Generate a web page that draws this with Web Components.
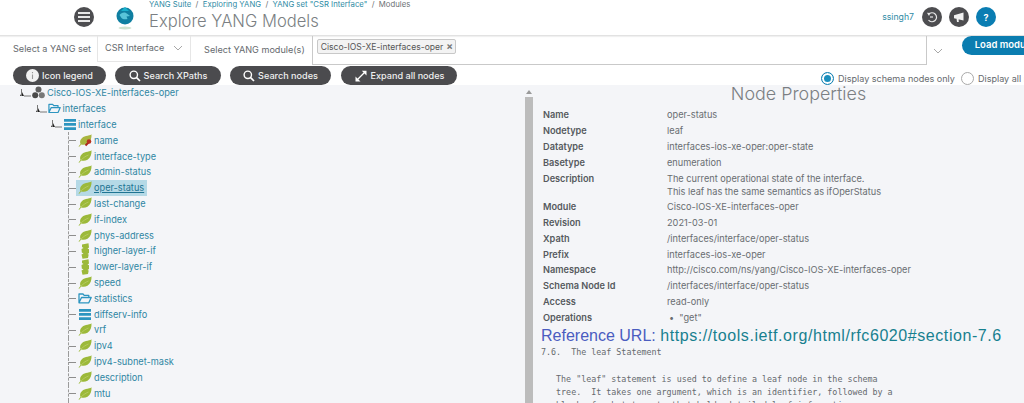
<!DOCTYPE html>
<html>
<head>
<meta charset="utf-8">
<title>Explore YANG Models</title>
<style>
    html, body { margin: 0; padding: 0; background: #fff; }
    body {
        width: 1024px;
        height: 403px;
        overflow: hidden;
        font-family: Inter, "Liberation Sans", sans-serif;
    }
</style>
</head>
<body>
<ys-app>
    <ys-header></ys-header>
    <ys-toolbar></ys-toolbar>
    <ys-actions></ys-actions>
    <ys-explorer></ys-explorer>
</ys-app>

<script>
const LEAF = "M.5 12.500 2.500 10C1 6 4 3 8 2 10 1.500 12.500 1.500 13.500 .3 13.800 4 12.500 8 9.500 9.800 7.500 11 5 11 3.300 10.500L1.200 12.800Z";
const VEIN = `<path d="M3 10C5.500 7.500 8 6 10.500 5" fill="none" stroke="#bdd070" stroke-width=".7"/>`;

const ICONS = {
    leaf: `<svg width="14" height="13" viewBox="0 0 14 13"><path d="${LEAF}" fill="#9cb93a"/>${VEIN}</svg>`,
    key: `<svg width="14" height="13" viewBox="0 0 14 13"><path d="${LEAF}" fill="#a9b640"/><path d="M7.500 11.500 11 8" stroke="#a8281c" stroke-width="2"/><circle cx="11" cy="7.500" r="2.300" fill="#b8321f"/></svg>`,
    list: `<svg width="12" height="11" viewBox="0 0 12 11"><path d="M0 0h12v2.700H0zM0 4.100h12v2.700H0zM0 8.200h12v2.700H0z" fill="#2d95c0"/></svg>`,
    folder: `<svg width="14" height="11" viewBox="0 0 14 11"><path d="M1 9.800V1h4l1.200 1.400h4.600V4.500M1 9.800l2.500-5.300H13.200L10.800 9.800Z" fill="none" stroke="#2d95c0" stroke-width="1.300" stroke-linejoin="round"/></svg>`,
    leaflist: `<svg width="10" height="16" viewBox="0 0 10 16"><path d="M2 1.500 8.500 .3 9 4.500 7.500 5.500 9 6.200 9 10 7.500 11 8.700 11.500 8 15 2.500 15.800 1.500 11.500 3.500 10.500 1.800 9.500 1.500 6 3.500 5 2 4Z" fill="#9cb93a"/></svg>`,
    module: `<svg width="13" height="13" viewBox="0 0 13 13"><circle cx="6.500" cy="3.600" r="3" fill="#5f5f5f"/><circle cx="3.200" cy="9.200" r="3" fill="#4a4a4a"/><circle cx="9.800" cy="9.200" r="3" fill="#777"/></svg>`,
    search: `<svg width="12" height="12" viewBox="0 0 12 12"><circle cx="4.800" cy="4.800" r="3.700" fill="none" stroke="#fff" stroke-width="1.400"/><path d="M7.600 7.600 11 11" stroke="#fff" stroke-width="1.700"/></svg>`,
    info: `<svg width="13" height="13" viewBox="0 0 13 13"><circle cx="6.500" cy="6.500" r="6.500" fill="#f2f2f2"/><path d="M6.500 3v1.200M6.500 5.500v4.500" stroke="#9a9a9a" stroke-width="1.100"/></svg>`,
    expand: `<svg width="14" height="14" viewBox="0 0 14 14"><path d="M3 11 11 3" stroke="#fff" stroke-width="1.300"/><path d="M7.800 1.800H12.500V6.500ZM1.500 7.500V12.500H6.500Z" fill="#fff"/></svg>`
};

class YsApp extends HTMLElement {
    constructor() {
        super();
        this.attachShadow({ mode: "open" }).innerHTML = `
            <style>
                :host { display: flex; flex-direction: column; width: 1024px; height: 403px; overflow: hidden; }
            </style>
            <slot></slot>`;
    }
}

class YsHeader extends HTMLElement {
    constructor() {
        super();
        this.attachShadow({ mode: "open" }).innerHTML = `
            <style>
                :host {
                    display: flex;
                    flex: none;
                    align-items: flex-start;
                    height: 36px;
                    box-sizing: border-box;
                    padding-left: 74px;
                    border-bottom: 1px solid #e2e2e2;
                    box-shadow: 0 1px 1px rgba(0, 0, 0, 0.06);
                }
                .round {
                    display: flex;
                    flex: none;
                    align-items: center;
                    justify-content: center;
                    width: 20px;
                    height: 20px;
                    margin-top: 7px;
                    border-radius: 50%;
                    background: #4d4d50;
                }
                .logo { flex: none; margin: 6px 0 0 22px; }
                .titles { flex: none; margin-left: 15px; }
                .crumbs {
                    height: 9px;
                    font-size: 7.750px;
                    line-height: 8px;
                    color: #2f8ba5;
                    white-space: pre;
                }
                .crumbs span { color: #6b6f73; }
                h1 {
                    margin: 2px 0 0;
                    font-size: 16.600px;
                    line-height: 20px;
                    font-weight: 300;
                    color: #7b7f83;
                }
                .user {
                    display: flex;
                    align-items: flex-start;
                    margin-left: auto;
                    padding-right: 28px;
                }
                .name { margin: 11px 8px 0 0; font-size: 8.700px; line-height: 12px; color: #2f8ba5; }
                .user .round { margin-left: 7px; }
                .user .name + .round { margin-left: 0; }
                .blue { background: #0a7db2; color: #fff; font-size: 9px; font-weight: 700; }
            </style>
            <div class="round">
                <svg width="12" height="10" viewBox="0 0 12 10"><path d="M0 1h12M0 5h12M0 9h12" stroke="#e8e8e8" stroke-width="2"/></svg>
            </div>
            <svg class="logo" width="18" height="24" viewBox="0 0 18 24">
                <ellipse cx="9" cy="22" rx="6.500" ry="1.500" fill="#cfe3d0"/>
                <circle cx="9" cy="10" r="8.500" fill="#0f7fa1"/>
                <path d="M9 1 13 5H5Z" fill="#18b0cc"/>
                <path d="M3.500 9c2-3 6-3.500 8-1l2.500 2-3.500.5 1 2.500c-2 .5-5 .5-6-1Z" fill="#58c4d8"/>
            </svg>
            <div class="titles">
                <div class="crumbs">YANG Suite<span>  /  </span>Exploring YANG<span>  /  </span>YANG set "CSR Interface"<span>  /  Modules</span></div>
                <h1>Explore YANG Models</h1>
            </div>
            <div class="user">
                <div class="name">ssingh7</div>
                <div class="round">
                    <svg width="12" height="12" viewBox="0 0 12 12"><path d="M2.500 3.500A4.500 4.500 0 1 1 2.500 9" fill="none" stroke="#e8e8e8" stroke-width="1.200"/><path d="M1 1.800 4.300 2 3 5Z" fill="#e8e8e8"/><path d="M4 6h3" stroke="#e8e8e8" stroke-width="1.200"/></svg>
                </div>
                <div class="round">
                    <svg width="12" height="12" viewBox="0 0 12 12"><path d="M1 4.200 10.500 1.500V9.500L1 7.200ZM3.500 7.500 5.500 8 5.800 11 4 11Z" fill="#f2f2f2"/></svg>
                </div>
                <div class="round blue">?</div>
            </div>`;
    }
}

class YsToolbar extends HTMLElement {
    constructor() {
        super();
        this.attachShadow({ mode: "open" }).innerHTML = `
            <style>
                :host {
                    display: flex;
                    flex: none;
                    align-items: flex-start;
                    width: 1060px;
                    height: 30px;
                    box-sizing: border-box;
                    padding-left: 13px;
                    font-size: 9.100px;
                    color: #666a6e;
                }
                .label { flex: none; margin-top: 6px; line-height: 14px; }
                .select {
                    display: flex;
                    flex: none;
                    justify-content: space-between;
                    align-items: center;
                    width: 94px;
                    height: 26px;
                    box-sizing: border-box;
                    margin-left: 6px;
                    padding: 0 7px 2px 7px;
                    border: 1px solid #e6e6e6;
                    border-top: none;
                }
                .second { margin: 7px 0 0 13px; }
                .multi {
                    flex: none;
                    width: 615px;
                    height: 29px;
                    box-sizing: border-box;
                    margin-left: 7px;
                    padding: 3px 0 0 4px;
                    border: 1px solid #c9c9c9;
                    border-top: none;
                }
                .chip {
                    display: inline-flex;
                    align-items: center;
                    height: 13px;
                    padding: 0 2px 0 3px;
                    border: 1px solid #c8c8c8;
                    border-radius: 2px;
                    background: #f3f3f3;
                    font-size: 8.550px;
                    color: #555;
                }
                .chip b { margin-left: 3px; font-size: 10px; color: #777; line-height: 9px; }
                .arrow { flex: none; margin: 12px 0 0 6px; }
                .load {
                    flex: none;
                    width: 90px;
                    height: 19px;
                    box-sizing: border-box;
                    margin-left: 19px;
                    padding-left: 13px;
                    border-radius: 10px;
                    background: #0b7db0;
                    color: #fff;
                    font-size: 9.500px;
                    font-weight: 600;
                    line-height: 17px;
                }
            </style>
            <div class="label">Select a YANG set</div>
            <div class="select">
                <span>CSR Interface</span>
                <svg width="10" height="6" viewBox="0 0 10 6"><path d="M1 1 5 5 9 1" fill="none" stroke="#a8a8a8"/></svg>
            </div>
            <div class="label second">Select YANG module(s)</div>
            <div class="multi">
                <span class="chip">Cisco-IOS-XE-interfaces-oper<b>×</b></span>
            </div>
            <svg class="arrow" width="10" height="6" viewBox="0 0 10 6"><path d="M1 1 5 5 9 1" fill="none" stroke="#a8a8a8"/></svg>
            <div class="load">Load modules</div>`;
    }
}

class YsPill extends HTMLElement {
    constructor() {
        super();
        const icon = ICONS[this.getAttribute("icon")];
        this.attachShadow({ mode: "open" }).innerHTML = `
            <style>
                :host {
                    display: inline-flex;
                    flex: none;
                    justify-content: center;
                    align-items: center;
                    gap: 3px;
                    height: 19px;
                    box-sizing: border-box;
                    border-radius: 10px;
                    background: #4b4b4e;
                    color: #f0f0f0;
                    font-size: 9.100px;
                    font-weight: 500;
                }
                svg { display: block; }
            </style>
            ${icon}<slot></slot>`;
    }
}

class YsRadio extends HTMLElement {
    constructor() {
        super();
        const on = this.hasAttribute("checked");
        this.attachShadow({ mode: "open" }).innerHTML = `
            <style>
                :host { display: inline-flex; flex: none; align-items: center; gap: 4px; font-size: 9.050px; color: #666a6e; }
                i {
                    display: block;
                    width: 13px;
                    height: 13px;
                    box-sizing: border-box;
                    border-radius: 50%;
                    border: 1px solid ${on ? "#0b7db0" : "#a9a9a9"};
                    background: #fff;
                    ${on ? "box-shadow: inset 0 0 0 2px #fff, inset 0 0 0 6px #1b8fbd;" : ""}
                }
            </style>
            <i></i><slot></slot>`;
    }
}

class YsActions extends HTMLElement {
    constructor() {
        super();
        this.attachShadow({ mode: "open" }).innerHTML = `
            <style>
                :host {
                    display: flex;
                    flex: none;
                    align-items: flex-start;
                    width: 1060px;
                    height: 19px;
                    box-sizing: border-box;
                    padding-left: 13px;
                }
                ys-pill { margin-right: 9px; }
                .radios { display: flex; gap: 6px; margin-left: 355px; padding-top: 6px; height: 13px; }
            </style>
            <ys-pill icon="info" style="width:93px">Icon legend</ys-pill>
            <ys-pill icon="search" style="width:106px">Search XPaths</ys-pill>
            <ys-pill icon="search" style="width:101px;margin-right:10px">Search nodes</ys-pill>
            <ys-pill icon="expand" style="width:116px">Expand all nodes</ys-pill>
            <div class="radios">
                <ys-radio checked>Display schema nodes only</ys-radio>
                <ys-radio>Display all nodes</ys-radio>
            </div>`;
    }
}

class YsNode extends HTMLElement {
    constructor() {
        super();
        const level = Number(this.getAttribute("level") || 0);
        const icon = ICONS[this.getAttribute("icon")] || "";
        const selected = this.hasAttribute("selected");
        const leaf = level === 3;
        this.attachShadow({ mode: "open" }).innerHTML = `
            <style>
                :host {
                    display: flex;
                    align-items: center;
                    height: 15.800px;
                    margin-left: ${leaf ? 68 : 19 + (level * 15.5)}px;
                    font-size: 9.200px;
                    color: #2f86a3;
                    white-space: nowrap;
                }
                .guide {
                    flex: none;
                    width: 10px;
                    height: 15.800px;
                    box-sizing: border-box;
                    border-left: 1px dashed #9b9b9b;
                    background: linear-gradient(#8d8d8d, #8d8d8d) 0 8px / 7px 1px no-repeat;
                }
                .open { flex: none; width: 12px; height: 8px; }
                .wrap {
                    display: flex;
                    flex: none;
                    align-items: center;
                    gap: 2px;
                    height: 15.800px;
                    padding-left: ${leaf ? 0 : 1}px;
                    padding-right: 3px;
                    ${selected ? "background: #b5d9e6; margin-left: -2px; padding-left: 2px;" : ""}
                }
                .icon { display: flex; justify-content: center; width: ${leaf ? 14 : 13}px; }
                .label { ${selected ? "text-decoration: underline; color: #1f7492;" : ""} }
            </style>
            ${leaf ? `<span class="guide"></span>` : `
            <svg class="open" viewBox="0 0 12 8"><path d="M1 7h4L3 3Z" fill="#222"/><path d="M2.500 0V7M5 7h7" stroke="#777" stroke-width="1"/></svg>`}
            ${icon ? `<span class="wrap"><span class="icon">${icon}</span><span class="label"><slot></slot></span></span>` : ""}`;
    }
}

class YsProp extends HTMLElement {
    constructor() {
        super();
        this.attachShadow({ mode: "open" }).innerHTML = `
            <style>
                :host {
                    display: grid;
                    grid-template-columns: 124px 1fr;
                    padding: 1.400px 0;
                    line-height: 13px;
                }
                .name { font-weight: 600; color: #565a5e; }
                .value { color: #696d71; }
            </style>
            <div class="name">${this.getAttribute("name")}</div>
            <div class="value"><slot></slot></div>`;
    }
}

class YsExplorer extends HTMLElement {
    constructor() {
        super();
        this.attachShadow({ mode: "open" }).innerHTML = `
            <style>
                :host {
                    display: flex;
                    flex: 1;
                    min-height: 0;
                    background: #f4f5f8;
                }
                .tree { flex: none; width: 525px; }
                .bar { flex: none; width: 8px; display: flex; flex-direction: column; align-items: center; }
                .bar svg { flex: none; margin-top: 5px; }
                .bar i { display: block; width: 8px; flex: 1; margin-top: 3px; background: #bcbcbc; }
                .props { flex: 1; min-width: 0; }
                h2 {
                    margin: 0;
                    padding-left: 40px;
                    text-align: center;
                    font-size: 17.900px;
                    line-height: 18px;
                    font-weight: 300;
                    color: #7b7f83;
                }
                .rows { margin: 4px 0 0 10px; font-size: 9.200px; }
                ul { margin: 0; padding: 0 0 0 2px; list-style: none; }
                li span { font-size: 7px; }
                .ref { margin: 1px 0 0 8px; font-size: 16px; line-height: 20px; color: #4a5cc0; white-space: nowrap; font-family: "Liberation Sans", sans-serif; }
                .ref a { color: #17808f; text-decoration: none; letter-spacing: .57px; }
                pre {
                    margin: 0 0 0 8px;
                    font-family: "DejaVu Sans Mono", monospace;
                    font-size: 8.360px;
                    line-height: 13.300px;
                    color: #666a6e;
                }
            </style>
            <div class="tree">
                <ys-node level="0" icon="module">Cisco-IOS-XE-interfaces-oper</ys-node>
                <ys-node level="1" icon="folder">interfaces</ys-node>
                <ys-node level="2" icon="list">interface</ys-node>
                <ys-node level="3" icon="key">name</ys-node>
                <ys-node level="3" icon="leaf">interface-type</ys-node>
                <ys-node level="3" icon="leaf">admin-status</ys-node>
                <ys-node level="3" icon="leaf" selected>oper-status</ys-node>
                <ys-node level="3" icon="leaf">last-change</ys-node>
                <ys-node level="3" icon="leaf">if-index</ys-node>
                <ys-node level="3" icon="leaf">phys-address</ys-node>
                <ys-node level="3" icon="leaflist">higher-layer-if</ys-node>
                <ys-node level="3" icon="leaflist">lower-layer-if</ys-node>
                <ys-node level="3" icon="leaf">speed</ys-node>
                <ys-node level="3" icon="folder">statistics</ys-node>
                <ys-node level="3" icon="list">diffserv-info</ys-node>
                <ys-node level="3" icon="leaf">vrf</ys-node>
                <ys-node level="3" icon="leaf">ipv4</ys-node>
                <ys-node level="3" icon="leaf">ipv4-subnet-mask</ys-node>
                <ys-node level="3" icon="leaf">description</ys-node>
                <ys-node level="3" icon="leaf">mtu</ys-node>
                <ys-node level="3"></ys-node>
            </div>
            <div class="bar">
                <svg width="6" height="4" viewBox="0 0 6 4"><path d="M3 0 6 4H0Z" fill="#9a9a9a"/></svg>
                <i></i>
            </div>
            <div class="props">
                <h2>Node Properties</h2>
                <div class="rows">
                    <ys-prop name="Name">oper-status</ys-prop>
                    <ys-prop name="Nodetype">leaf</ys-prop>
                    <ys-prop name="Datatype">interfaces-ios-xe-oper:oper-state</ys-prop>
                    <ys-prop name="Basetype">enumeration</ys-prop>
                    <ys-prop name="Description">The current operational state of the interface.<br>This leaf has the same semantics as ifOperStatus</ys-prop>
                    <ys-prop name="Module">Cisco-IOS-XE-interfaces-oper</ys-prop>
                    <ys-prop name="Revision">2021-03-01</ys-prop>
                    <ys-prop name="Xpath">/interfaces/interface/oper-status</ys-prop>
                    <ys-prop name="Prefix">interfaces-ios-xe-oper</ys-prop>
                    <ys-prop name="Namespace">http://cisco.com/ns/yang/Cisco-IOS-XE-interfaces-oper</ys-prop>
                    <ys-prop name="Schema Node Id">/interfaces/interface/oper-status</ys-prop>
                    <ys-prop name="Access">read-only</ys-prop>
                    <ys-prop name="Operations"><ul><li>•&nbsp; "get"</li></ul></ys-prop>
                </div>
                <div class="ref">Reference URL: <a>https://tools.ietf.org/html/rfc6020#section-7.6</a></div>
                <pre>7.6.  The leaf Statement

   The "leaf" statement is used to define a leaf node in the schema
   tree.  It takes one argument, which is an identifier, followed by a
   block of substatements that holds detailed leaf information.</pre>
            </div>`;
    }
}

customElements.define("ys-app", YsApp);
customElements.define("ys-header", YsHeader);
customElements.define("ys-toolbar", YsToolbar);
customElements.define("ys-pill", YsPill);
customElements.define("ys-radio", YsRadio);
customElements.define("ys-actions", YsActions);
customElements.define("ys-node", YsNode);
customElements.define("ys-prop", YsProp);
customElements.define("ys-explorer", YsExplorer);
</script>
</body>
</html>
